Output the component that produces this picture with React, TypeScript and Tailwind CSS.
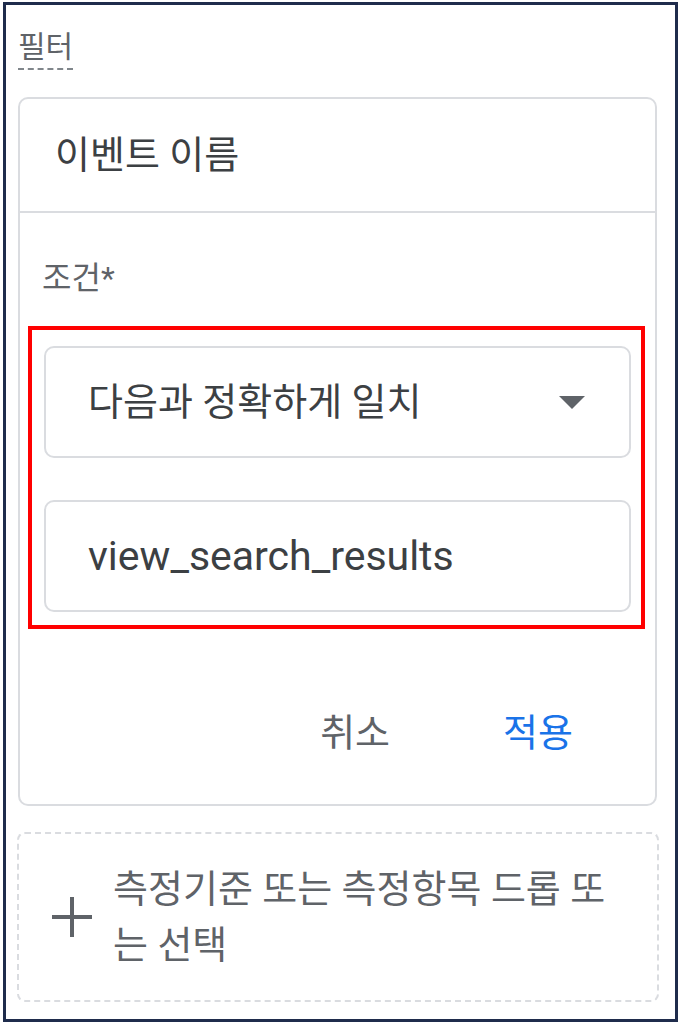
const font = "font-['Roboto','Noto_Sans_CJK_KR',sans-serif]"

export default function App() {
  return (
    <div className={`w-[681px] h-[1024px] bg-white pt-[2px] pl-[3px] ${font}`}>
      <div className="w-[675px] h-[1020px] border-[3px] border-[#1f2c4c] pl-[12px]">
        {/* Title */}
        <div className="mt-[24px] flex">
          <span className="text-[30px] leading-[36px] text-[#5f6368] pb-[3px] border-b-2 border-dashed border-[#80868b]">
            필터
          </span>
        </div>

        {/* Filter card */}
        <div className="mt-[27px] w-[639px] border-2 border-[#dadce0] rounded-[10px]">
          <div className="h-[114px] flex items-center pl-[35px] border-b-2 border-[#dadce0]">
            <span className="text-[38px] leading-[44px] text-[#3c4043]">이벤트 이름</span>
          </div>

          <div className="px-[8px] pt-[47px]">
            <div className="ml-[14px] text-[32px] leading-[36px] text-[#5f6368]">조건*</div>

            {/* highlighted area */}
            <div className="mt-[30px] w-[617px] border-[4px] border-[#ff0000] pl-[12px] pr-[10px] pt-[16px] pb-[13px]">
              <div className="h-[112px] border-2 border-[#dadce0] rounded-[10px] flex items-center justify-between pl-[42px] pr-[44px]">
                <span className="text-[38px] leading-[44px] text-[#3c4043]">다음과 정확하게 일치</span>
                <svg width="26" height="13" viewBox="0 0 26 13">
                  <polygon points="0,0 26,0 13,13" fill="#5f6368" />
                </svg>
              </div>
              <div className="mt-[42px] h-[112px] border-2 border-[#dadce0] rounded-[10px] flex items-center pl-[42px]">
                <span className="text-[41px] leading-[44px] text-[#3c4043]">view_search_results</span>
              </div>
            </div>

            <div className="mt-[82px] pb-[49px] flex justify-end gap-[113px] pr-[74px]">
              <span className="text-[38px] leading-[44px] text-[#5f6368]">취소</span>
              <span className="text-[38px] leading-[44px] text-[#1a73e8]">적용</span>
            </div>
          </div>
        </div>

        {/* Add dimension / metric */}
        <div className="mt-[26px] -ml-[1px] w-[642px] h-[170px] border-2 border-dashed border-[#dadce0] rounded-[8px] flex items-center pl-[33px]">
          <svg width="40" height="40" viewBox="0 0 40 40" className="shrink-0">
            <rect x="18" y="0" width="4" height="40" fill="#5f6368" />
            <rect x="0" y="18" width="40" height="4" fill="#5f6368" />
          </svg>
          <span className="ml-[21px] w-[520px] text-[38px] leading-[56px] text-[#5f6368]">
            측정기준 또는 측정항목 드롭 또는 선택
          </span>
        </div>
      </div>
    </div>
  )
}
